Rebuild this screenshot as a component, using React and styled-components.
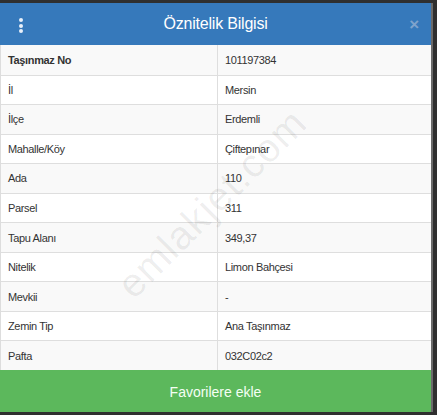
import React from "react";
import styled, { createGlobalStyle } from "styled-components";

const Global = createGlobalStyle`
  html, body { margin: 0; padding: 0; }
  body { background: #2b2b2b; font-family: "Liberation Sans", Arial, sans-serif; }
`;

const Page = styled.div`
  width: 437px;
  height: 415px;
  padding-top: 3px;
  box-sizing: border-box;
  background: #2f2f2f;
  overflow: hidden;
`;

const Modal = styled.div`
  position: relative;
  width: 433px;
  background: #fff;
  border-right: 2px solid #6a6a6a;
  box-sizing: border-box;
  overflow: hidden;
`;

const Header = styled.div`
  height: 42px;
  background: #3679bb;
  display: flex;
  align-items: center;
  justify-content: center;
  position: relative;
  color: #fff;
  font-size: 16px;
  letter-spacing: -0.2px;
`;

const Menu = styled.div`
  position: absolute;
  left: 19px;
  top: 15px;
  display: flex;
  flex-direction: column;
  gap: 1.5px;
  span {
    width: 4px;
    height: 4px;
    border-radius: 50%;
    background: #e8f0fa;
  }
`;

const Close = styled.div`
  position: absolute;
  right: 12px;
  top: 12px;
  font-size: 17px;
  font-weight: bold;
  color: #7fa3cc;
`;

const Table = styled.div`
  display: flex;
  flex-direction: column;
  border-left: 1px solid #ddd;
`;

const Row = styled.div`
  display: grid;
  grid-template-columns: 216px 1fr;
  height: 29.55px;
  box-sizing: border-box;
  border-top: ${(p) => (p.$first ? "none" : "1px solid #dedede")};
  background: ${(p) => (p.$striped ? "#f9f9f9" : "#fff")};
  font-size: 11px;
  letter-spacing: -0.35px;
  color: #333;
`;

const Cell = styled.div`
  display: flex;
  align-items: center;
  padding-left: 7px;
  font-weight: ${(p) => (p.$bold ? "bold" : "normal")};
  border-left: ${(p) => (p.$divider ? "1px solid #dedede" : "none")};
`;

const Button = styled.div`
  height: 42px;
  background: #5cb85c;
  color: #f4fff4;
  font-family: "Liberation Sans Narrow", "Liberation Sans", Arial, sans-serif;
  font-size: 14px;
  padding-top: 2px;
  box-sizing: border-box;
  display: flex;
  align-items: center;
  justify-content: center;
`;

const Watermark = styled.div`
  position: absolute;
  left: 88px;
  top: 178px;
  font-size: 40px;
  color: rgba(0, 0, 0, 0.07);
  transform: rotate(-45deg);
  pointer-events: none;
  letter-spacing: 1px;
`;

const rows = [
  ["Taşınmaz No", "101197384"],
  ["İl", "Mersin"],
  ["İlçe", "Erdemli"],
  ["Mahalle/Köy", "Çiftepınar"],
  ["Ada", "110"],
  ["Parsel", "311"],
  ["Tapu Alanı", "349,37"],
  ["Nitelik", "Limon Bahçesi"],
  ["Mevkii", "-"],
  ["Zemin Tip", "Ana Taşınmaz"],
  ["Pafta", "032C02c2"],
];

export default function App() {
  return (
    <>
      <Global />
      <Page>
        <Modal>
          <Header>
            <Menu>
              <span />
              <span />
              <span />
            </Menu>
            Öznitelik Bilgisi
            <Close>×</Close>
          </Header>
          <Table>
            {rows.map(([k, v], i) => (
              <Row key={k} $first={i === 0} $striped={i % 2 === 0}>
                <Cell $bold={i === 0}>{k}</Cell>
                <Cell $divider>{v}</Cell>
              </Row>
            ))}
          </Table>
          <Button>Favorilere ekle</Button>
          <Watermark>emlakjet.com</Watermark>
        </Modal>
      </Page>
    </>
  );
}
